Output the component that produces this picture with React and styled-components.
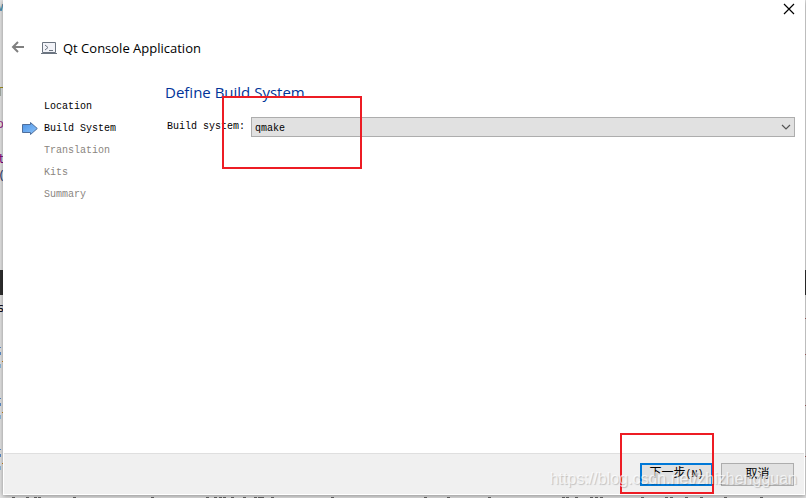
import React, { useState } from 'react';
import styled, { createGlobalStyle } from 'styled-components';

const GlobalStyle = createGlobalStyle`
  * {
    box-sizing: border-box;
  }

  body {
    margin: 0;
    background: #e4e4e4;
    overflow: hidden;
  }
`;

const Desktop = styled.div`
  position: relative;
  display: flex;
  height: 100vh;
  padding: 0 1px 3px 3px;
  background: #e4e4e4;
  overflow: hidden;
`;

const EditorArt = styled.svg`
  position: absolute;
  left: 0;
  bottom: 0;
  width: 100%;
  height: 100%;
`;

const EdgeText = styled.span`
  position: absolute;
  top: ${(props) => props.$top}px;
  right: calc(100% - 4px);
  color: ${(props) => props.$color};
  font: 13px/16px 'DejaVu Sans', sans-serif;
`;

const Dialog = styled.main`
  position: relative;
  flex: 1;
  display: flex;
  flex-direction: column;
  background: #fff;
  box-shadow: 0 1px 5px rgba(0, 0, 0, 0.4);
  color: #000;
  font-family: 'Liberation Mono', 'Noto Sans CJK SC', monospace;
  font-size: 10px;
  line-height: 22px;
`;

const TitleBar = styled.div`
  display: flex;
  justify-content: flex-end;
  height: 36px;
`;

const IconButton = styled.button`
  display: flex;
  align-items: center;
  justify-content: center;
  width: ${(props) => props.$width}px;
  height: ${(props) => props.$height}px;
  padding: 0;
  border: none;
  background: transparent;
`;

const Header = styled.header`
  display: flex;
  align-items: center;
  height: 24px;
  padding-left: 4px;
`;

const Title = styled.h1`
  margin: 0 0 0 6px;
  font: 13px/24px 'Open Sans', sans-serif;
`;

const Body = styled.div`
  flex: 1;
  display: flex;
  padding: 20px 10px 0 18px;
`;

const Steps = styled.ol`
  width: 144px;
  margin: 0;
  padding: 16px 0 0;
  list-style: none;
`;

const Step = styled.li`
  display: flex;
  align-items: center;
  height: 22px;
  color: ${(props) => (props.$pending ? '#8a8580' : '#000')};
`;

const Marker = styled.span`
  display: flex;
  width: 23px;
`;

const Page = styled.section`
  flex: 1;
`;

const PageTitle = styled.h2`
  margin: 0;
  color: #003399;
  font: 15px/24px 'Open Sans', sans-serif;
`;

const Field = styled.div`
  display: flex;
  align-items: center;
  gap: 6px;
  margin-top: 12px;
  padding-left: 2px;
`;

const SelectWrap = styled.div`
  flex: 1;
  display: grid;
  align-items: center;

  > * {
    grid-area: 1 / 1;
  }

  svg {
    justify-self: end;
    margin-right: 4px;
    pointer-events: none;
  }
`;

const Select = styled.select`
  appearance: none;
  width: 100%;
  height: 20px;
  padding: 0 20px 0 3px;
  border: 1px solid #adadad;
  border-radius: 0;
  background: #e1e1e1;
  color: #000;
  font: inherit;
`;

const Footer = styled.footer`
  display: flex;
  justify-content: flex-end;
  gap: 8px;
  height: 41px;
  margin: 0 1px 1px;
  padding: 9px 10px 0;
  border-top: 1px solid #dfdfdf;
  background: #f0f0f0;
`;

const Button = styled.button`
  width: 73px;
  height: 23px;
  padding: 0;
  border: ${(props) => (props.$primary ? '2px solid #0078d7' : '1px solid #adadad')};
  background: #e1e1e1;
  color: #000;
  font: 12px/18px 'Liberation Mono', 'Noto Sans CJK SC', monospace;
`;

const Mnemonic = styled.span`
  font-size: 10px;
`;

const Highlight = styled.div`
  position: absolute;
  left: ${(props) => props.$left};
  right: ${(props) => props.$right};
  top: ${(props) => props.$top};
  bottom: ${(props) => props.$bottom};
  width: ${(props) => props.$width}px;
  height: ${(props) => props.$height}px;
  border: 2px solid #ed1c24;
  pointer-events: none;
`;

const Watermark = styled.span`
  position: absolute;
  right: 8px;
  bottom: 6px;
  color: rgba(255, 255, 255, 0.7);
  font: 16px/20px 'Liberation Sans', sans-serif;
  text-shadow: 1px 1px 1px rgba(0, 0, 0, 0.2);
  pointer-events: none;
`;

const edgeLetters = [
  { text: 'w', top: -1, color: '#4b8dad' },
  { text: 'T', top: 84, color: '#a09020' },
  { text: 'p', top: 116, color: '#a03090' },
  { text: 't', top: 151, color: '#800080' },
  { text: '(', top: 168, color: '#304070' },
  { text: 's', top: 300, color: '#101020' },
];

// tops of the letters in the text line that the dialog covers
const letterTips = [
  12, 26, 34, 38, 73, 151, 206, 214, 219, 223, 231, 243, 254, 258, 261, 271,
  331, 424, 447, 488, 562, 566, 575, 590, 595, 600, 641, 665, 670,
  685, 700, 724, 760,
];

const steps = ['Location', 'Build System', 'Translation', 'Kits', 'Summary'];
const currentStep = 1;

const Editor = () => (
  <>
    <EditorArt viewBox="0 0 806 498" preserveAspectRatio="none" aria-hidden="true">
      <path d="M0 270H806V295H0Z" fill="#303030" />
      {[347, 398, 449].map((y) => (
        <g key={y}>
          <path d={`M0 ${y}h1v1h-1zM0 ${y + 5}h1v3h-1z`} fill="#5b8cc8" />
          <path d={`M2 ${y + 14}h1v1h-1z`} fill="#d08a20" />
          <path d={`M0 ${y + 17}h1v4h-1z`} fill="#8dbbe0" />
        </g>
      ))}
      {letterTips.map((x) => (
        <path key={x} d={`M${x} 497h3v1h-3z`} fill="#666" />
      ))}
      <path d="M805 318h1v1h-1zM805 354h1v1h-1zM805 405h1v1h-1zM805 456h1v1h-1z" fill="#a66" />
    </EditorArt>
    {edgeLetters.map((letter) => (
      <EdgeText key={letter.top} $top={letter.top} $color={letter.color} aria-hidden="true">
        {letter.text}
      </EdgeText>
    ))}
  </>
);

const App = () => {
  const [system, setSystem] = useState('qmake');

  return (
    <Desktop>
      <GlobalStyle />
      <Editor />
      <Dialog>
        <TitleBar>
          <IconButton $width={32} $height={18} aria-label="Close">
            <svg width="12" height="12" viewBox="0 0 12 12" stroke="#000" strokeWidth="1.2">
              <path d="M1 1L11 11M11 1L1 11" />
            </svg>
          </IconButton>
        </TitleBar>
        <Header>
          <IconButton $width={22} $height={22} aria-label="Back">
            <svg width="14" height="14" viewBox="0 0 14 14" fill="none" stroke="#808080" strokeWidth="2">
              <path d="M13 6H2M7 1L2 6L7 11" />
            </svg>
          </IconButton>
          <svg width="28" height="14" viewBox="0 0 28 14" fill="none" stroke="#6b7480">
            <path d="M13.5 1.5h13v10h-13z" fill="#f2f3f8" />
            <path d="M12 12.5h16" />
            <path d="M16 4l3 2.5l-3 2.5M20 9.5h4" />
          </svg>
          <Title>Qt Console Application</Title>
        </Header>
        <Body>
          <Steps>
            {steps.map((step, index) => (
              <Step key={step} $pending={index > currentStep}>
                <Marker>
                  {index === currentStep && (
                    <svg width="17" height="14" viewBox="0 0 17 14">
                      <defs>
                        <linearGradient id="arrow" x1="0" y1="0" x2="1" y2="1">
                          <stop offset="0" stopColor="#4d93e6" />
                          <stop offset="1" stopColor="#8cc4fa" />
                        </linearGradient>
                      </defs>
                      <path d="M1.5 2.5H9.5V.5L16.3 6.5L9.5 12.5V10.5H1.5Z" fill="url(#arrow)" stroke="#4f6f9c" />
                    </svg>
                  )}
                </Marker>
                {step}
              </Step>
            ))}
          </Steps>
          <Page>
            <PageTitle>Define Build System</PageTitle>
            <Field>
              <label htmlFor="build-system">Build system:</label>
              <SelectWrap>
                <Select id="build-system" value={system} onChange={(e) => setSystem(e.target.value)}>
                  <option>qmake</option>
                </Select>
                <svg width="10" height="6" viewBox="0 0 10 6" fill="none" stroke="#555" strokeWidth="1.2">
                  <path d="M1 1L5 5L9 1" />
                </svg>
              </SelectWrap>
            </Field>
          </Page>
        </Body>
        <Footer>
          <Button $primary>
            下一步<Mnemonic>(N)</Mnemonic>
          </Button>
          <Button>取消</Button>
        </Footer>
        <Highlight $left="219px" $top="96px" $width={140} $height={73} />
        <Highlight $right="91px" $bottom="1px" $width={94} $height={61} />
        <Watermark>https://blog.csdn.net/zhizhengguan</Watermark>
      </Dialog>
    </Desktop>
  );
};

export default App;
